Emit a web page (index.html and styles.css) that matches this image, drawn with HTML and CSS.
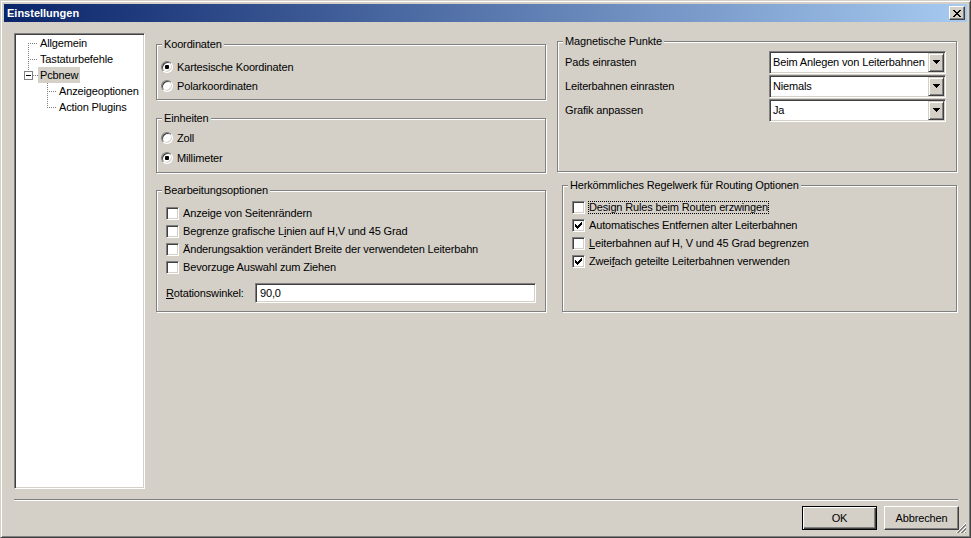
FILE: index.html
```html
<!DOCTYPE html>
<html>
<head>
<meta charset="utf-8">
<link rel="stylesheet" href="styles.css">
</head>
<body>
<div class="window">
  <div class="titlebar">
    <span class="title">Einstellungen</span>
    <span class="closebtn"><svg width="8" height="7" viewBox="0 0 8 7" shape-rendering="crispEdges"><path d="M0 0h2v1h-2z M6 0h2v1h-2z M1 1h2v1h-2z M5 1h2v1h-2z M2 2h4v1h-4z M3 3h2v1h-2z M2 4h4v1h-4z M1 5h2v1h-2z M5 5h2v1h-2z M0 6h2v1h-2z M6 6h2v1h-2z" fill="#000"/></svg></span>
  </div>
  <div class="body">
    <div class="main">
      <div class="tree">
        <div class="node">
          <svg class="twig" width="22" height="16" shape-rendering="crispEdges"><path d="M12.5 8V16 M12 8.5H22" stroke="#808080" stroke-dasharray="1 1" fill="none"/></svg>
          <span class="label">Allgemein</span>
        </div>
        <div class="node">
          <svg class="twig" width="22" height="16" shape-rendering="crispEdges"><path d="M12.5 0V16 M12 8.5H22" stroke="#808080" stroke-dasharray="1 1" fill="none"/></svg>
          <span class="label">Tastaturbefehle</span>
        </div>
        <div class="node">
          <svg class="twig" width="22" height="16" shape-rendering="crispEdges"><path d="M12.5 0V4 M17 8.5H22" stroke="#808080" stroke-dasharray="1 1" fill="none"/><rect x="8.5" y="4.5" width="8" height="8" fill="#fff" stroke="#808080"/><path d="M10 8.5H15" stroke="#000"/></svg>
          <span class="label sel">Pcbnew</span>
        </div>
        <div class="node">
          <svg class="twig" width="41" height="16" shape-rendering="crispEdges"><path d="M31.5 0V16 M31 8.5H41" stroke="#808080" stroke-dasharray="1 1" fill="none"/></svg>
          <span class="label">Anzeigeoptionen</span>
        </div>
        <div class="node">
          <svg class="twig" width="41" height="16" shape-rendering="crispEdges"><path d="M31.5 0V8 M31 8.5H41" stroke="#808080" stroke-dasharray="1 1" fill="none"/></svg>
          <span class="label">Action Plugins</span>
        </div>
      </div>

      <div class="col-left">
        <div class="group g-koord">
          <span class="legend">Koordinaten</span>
          <div class="ropt r19"><span class="radio on"></span>Kartesische Koordinaten</div>
          <div class="ropt r19"><span class="radio"></span>Polarkoordinaten</div>
        </div>
        <div class="group g-einh">
          <span class="legend">Einheiten</span>
          <div class="ropt r20"><span class="radio"></span>Zoll</div>
          <div class="ropt r20"><span class="radio on"></span>Millimeter</div>
        </div>
        <div class="group g-bearb">
          <span class="legend">Bearbeitungsoptionen</span>
          <div class="copt"><span class="check"></span>Anzeige von Seitenrändern</div>
          <div class="copt"><span class="check"></span>Begrenze grafische L<u>i</u>nien auf H,V und 45 Grad</div>
          <div class="copt"><span class="check"></span>Änderungsaktion verändert Breite der verwendeten Leiterbahn</div>
          <div class="copt"><span class="check"></span>Bevorzuge Auswahl zum Ziehen</div>
          <div class="rotrow">
            <span class="rotlabel"><u>R</u>otationswinkel:</span>
            <span class="textinput">90,0</span>
          </div>
        </div>
      </div>

      <div class="col-right">
        <div class="group g-magn">
          <span class="legend">Magnetische Punkte</span>
          <div class="mrow"><span>Pads einrasten</span><span class="combo"><span class="combo-text">Beim Anlegen von Leiterbahnen</span><span class="dd"><svg width="7" height="4" shape-rendering="crispEdges"><path d="M0 0h7v1h-1v1h-1v1h-1v1h-1v-1h-1v-1h-1v-1h-1z" fill="#000"/></svg></span></span></div>
          <div class="mrow"><span>Leiterbahnen einrasten</span><span class="combo"><span class="combo-text">Niemals</span><span class="dd"><svg width="7" height="4" shape-rendering="crispEdges"><path d="M0 0h7v1h-1v1h-1v1h-1v1h-1v-1h-1v-1h-1v-1h-1z" fill="#000"/></svg></span></span></div>
          <div class="mrow"><span>Grafik anpassen</span><span class="combo"><span class="combo-text">Ja</span><span class="dd"><svg width="7" height="4" shape-rendering="crispEdges"><path d="M0 0h7v1h-1v1h-1v1h-1v1h-1v-1h-1v-1h-1v-1h-1z" fill="#000"/></svg></span></span></div>
        </div>
        <div class="group g-route">
          <span class="legend">Herkömmliches Regelwerk für Routing Optionen</span>
          <div class="copt"><span class="check"></span><span class="focus">Design Rules beim Routen erzwingen</span></div>
          <div class="copt"><span class="check on"><svg width="7" height="7" shape-rendering="crispEdges"><path d="M0 2h1v3h-1z M1 3h1v3h-1z M2 4h1v3h-1z M3 3h1v3h-1z M4 2h1v3h-1z M5 1h1v3h-1z M6 0h1v3h-1z" fill="#000"/></svg></span>Automatisches Entfernen alter Leiterbahnen</div>
          <div class="copt"><span class="check"></span><u>L</u>eiterbahnen auf H, V und 45 Grad begrenzen</div>
          <div class="copt"><span class="check on"><svg width="7" height="7" shape-rendering="crispEdges"><path d="M0 2h1v3h-1z M1 3h1v3h-1z M2 4h1v3h-1z M3 3h1v3h-1z M4 2h1v3h-1z M5 1h1v3h-1z M6 0h1v3h-1z" fill="#000"/></svg></span>Zwei<u>f</u>ach geteilte Leiterbahnen verwenden</div>
        </div>
      </div>
    </div>

    <div class="sep"></div>
    <div class="footer">
      <span class="btn default">OK</span>
      <span class="btn">Abbrechen</span>
    </div>
  </div>
  <svg class="grip" width="12" height="12" shape-rendering="crispEdges"><path d="M11 1L1 11 M11 5L5 11 M11 9L9 11" stroke="#fff" fill="none"/><path d="M11 2L2 11 M11 3L3 11 M11 6L6 11 M11 7L7 11 M11 10L10 11" stroke="#808080" fill="none"/></svg>
</div>
</body>
</html>
```
FILE: styles.css
```css
* { box-sizing: border-box; }
html, body { margin: 0; padding: 0; }
body {
  width: 971px;
  height: 538px;
  overflow: hidden;
  background: #d4d0c8;
  font-family: "Liberation Sans", Arial, sans-serif;
  font-size: 11px;
  letter-spacing: -0.15px;
  color: #000;
}
u { text-decoration: underline; text-underline-offset: 1px; }

.window {
  position: relative;
  width: 971px;
  height: 538px;
  border: 1px solid;
  border-color: #d4d0c8 #404040 #404040 #d4d0c8;
  box-shadow: inset 1px 1px #fff, inset -1px -1px #808080;
  padding: 3px;
  background: #d4d0c8;
}

.titlebar {
  height: 18px;
  display: flex;
  align-items: center;
  padding-left: 3px;
  background: linear-gradient(to right, #0a246a, #a6caf0);
  color: #fff;
  font-weight: bold;
  letter-spacing: 0;
}
.closebtn {
  margin-left: auto;
  margin-right: 2px;
  width: 16px;
  height: 14px;
  display: flex;
  align-items: center;
  justify-content: center;
  background: #d4d0c8;
  border: 1px solid;
  border-color: #fff #404040 #404040 #fff;
  box-shadow: inset -1px -1px #808080;
}
.closebtn svg { display: block; }

.body { padding: 11px 0 0 10px; }
.main { display: flex; align-items: flex-start; }

.tree {
  width: 131px;
  height: 456px;
  background: #fff;
  border: 1px solid;
  border-color: #808080 #fff #fff #808080;
  box-shadow: inset 1px 1px #404040, inset -1px -1px #d4d0c8;
  padding: 1px;
}
.node { display: flex; align-items: center; height: 16px; white-space: nowrap; }
.twig { display: block; flex: none; }
.label { padding: 0 2px; line-height: 16px; }
.label.sel { background: #d4d0c8; }

.col-left { width: 390px; margin-left: 11px; }
.col-right { width: 400px; margin-left: 11px; }

.group {
  position: relative;
  border: 1px solid #808080;
  box-shadow: inset 1px 1px #fff, 1px 1px #fff;
}
.legend {
  position: absolute;
  top: -7px;
  left: 5px;
  padding: 0 2px;
  line-height: 13px;
  background: #d4d0c8;
  white-space: nowrap;
}

.g-koord { margin-top: 11px; height: 56px; padding: 12px 0 0 4px; }
.g-einh { margin-top: 18px; height: 55px; padding: 9px 0 0 4px; }
.g-bearb { margin-top: 17px; height: 122px; padding: 13px 0 0 9px; }
.g-magn { margin-top: 8px; height: 131px; padding: 8px 10px 0 7px; }
.g-route { margin-top: 13px; margin-left: 5px; width: 395px; height: 127px; padding: 12px 0 0 9px; }

.ropt { display: flex; align-items: center; white-space: nowrap; }
.r19 { height: 19px; }
.r20 { height: 20px; }
.radio {
  width: 12px;
  height: 12px;
  flex: none;
  margin-right: 4px;
  border-radius: 50%;
  background: #fff;
  border: 1px solid;
  border-color: #808080 #fff #fff #808080;
  box-shadow: inset 1px 1px #404040, inset -1px -1px #d4d0c8;
  display: flex;
  align-items: center;
  justify-content: center;
}
.radio.on::after {
  content: "";
  width: 4px;
  height: 4px;
  border-radius: 1px;
  background: #000;
}

.copt { display: flex; align-items: center; height: 18px; white-space: nowrap; }
.check {
  width: 13px;
  height: 13px;
  flex: none;
  margin-right: 4px;
  background: #fff;
  border: 1px solid;
  border-color: #808080 #fff #fff #808080;
  box-shadow: inset 1px 1px #404040, inset -1px -1px #d4d0c8;
  display: flex;
  align-items: center;
  justify-content: center;
}
.check svg { display: block; }
.focus { outline: 1px dotted #000; outline-offset: 0; line-height: 11px; }

.rotrow { display: flex; align-items: center; margin-top: 7px; }
.rotlabel { width: 89px; flex: none; }
.textinput {
  width: 281px;
  height: 20px;
  background: #fff;
  border: 1px solid;
  border-color: #808080 #fff #fff #808080;
  box-shadow: inset 1px 1px #404040, inset -1px -1px #d4d0c8;
  padding: 0 4px;
  line-height: 18px;
}

.mrow {
  display: flex;
  align-items: center;
  justify-content: space-between;
  height: 24px;
  white-space: nowrap;
}
.combo {
  width: 177px;
  height: 23px;
  display: flex;
  background: #fff;
  border: 1px solid;
  border-color: #808080 #fff #fff #808080;
  box-shadow: inset 1px 1px #404040, inset -1px -1px #d4d0c8;
  padding: 1px;
}
.combo-text { flex: 1; padding-left: 2px; line-height: 19px; overflow: hidden; }
.dd {
  width: 16px;
  height: 19px;
  flex: none;
  background: #d4d0c8;
  border: 1px solid;
  border-color: #d4d0c8 #404040 #404040 #d4d0c8;
  box-shadow: inset 1px 1px #fff, inset -1px -1px #808080;
  display: flex;
  align-items: center;
  justify-content: center;
}
.dd svg { display: block; }

.sep {
  margin-top: 10px;
  width: 944px;
  height: 2px;
  border-top: 1px solid #808080;
  border-bottom: 1px solid #fff;
}
.footer {
  width: 945px;
  margin-top: 5px;
  display: flex;
  justify-content: flex-end;
  gap: 7px;
}
.btn {
  width: 75px;
  height: 24px;
  display: flex;
  align-items: center;
  justify-content: center;
  background: #d4d0c8;
  border: 1px solid;
  border-color: #fff #404040 #404040 #fff;
  box-shadow: inset -1px -1px #808080;
}
.btn.default {
  border-color: #000;
  box-shadow: inset 1px 1px #fff, inset -1px -1px #404040, inset -2px -2px #808080;
}

.grip { position: absolute; right: 3px; bottom: 3px; display: block; }
```
